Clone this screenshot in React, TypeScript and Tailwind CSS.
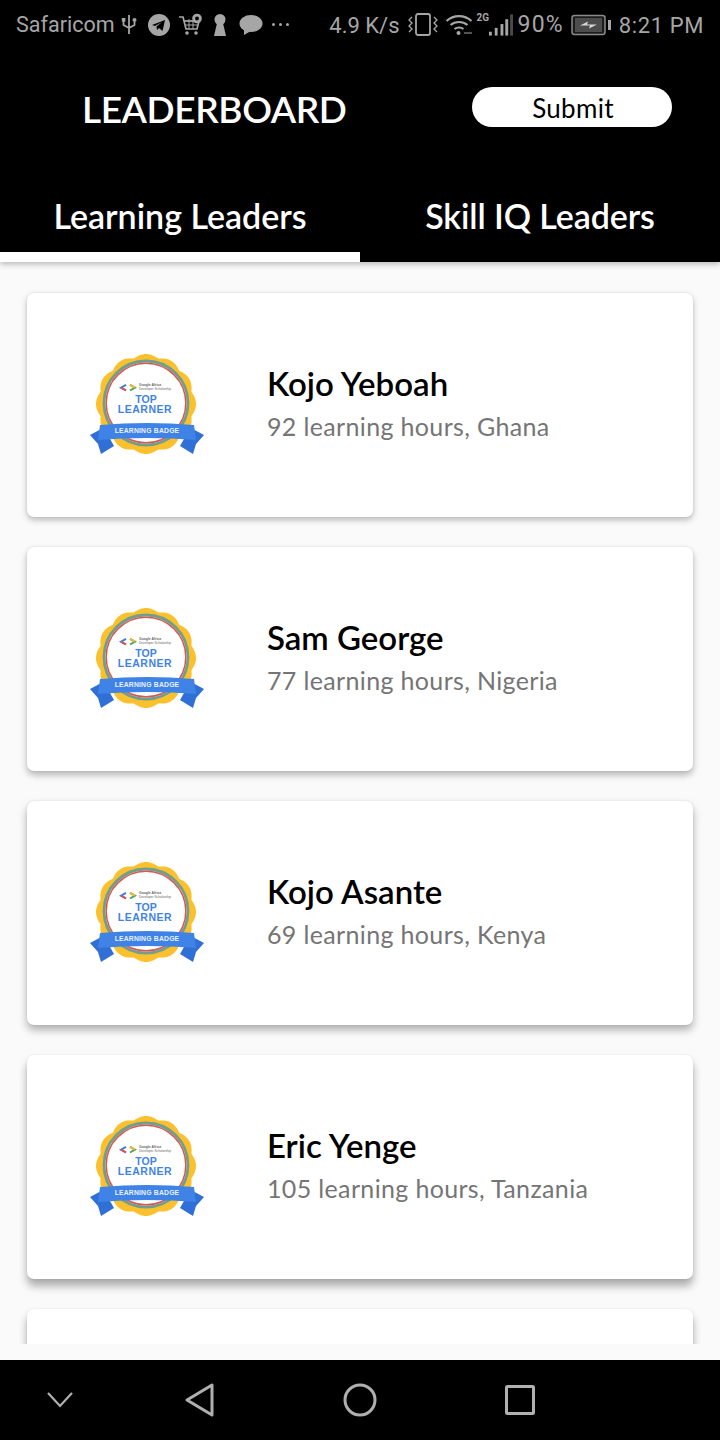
const leaders = [
  { name: "Kojo Yeboah", detail: "92 learning hours, Ghana", shadow: "shadow-[0_3px_6px_rgba(0,0,0,0.26),0_0_2px_rgba(0,0,0,0.1)]" },
  { name: "Sam George", detail: "77 learning hours, Nigeria", shadow: "shadow-[0_4px_7px_rgba(0,0,0,0.28),0_0_2px_rgba(0,0,0,0.1)]" },
  { name: "Kojo Asante", detail: "69 learning hours, Kenya", shadow: "shadow-[0_5px_8px_rgba(0,0,0,0.3),0_0_2px_rgba(0,0,0,0.1)]" },
  { name: "Eric Yenge", detail: "105 learning hours, Tanzania", shadow: "shadow-[0_7px_9px_rgba(0,0,0,0.32),0_0_2px_rgba(0,0,0,0.1)]" },
];

// scalloped edge for the badge, 12 bumps round the centre
function scallopPath(cx: number, cy: number, r: number, amp: number, bumps: number) {
  const pts: string[] = [];
  for (let i = 0; i <= 360; i++) {
    const a = (i / 360) * Math.PI * 2;
    const rad = r + amp * Math.abs(Math.cos((a * bumps) / 2));
    pts.push(`${(cx + rad * Math.sin(a)).toFixed(2)} ${(cy - rad * Math.cos(a)).toFixed(2)}`);
  }
  return `M${pts.join("L")}Z`;
}

function Badge() {
  return (
    <svg width="116" height="104" viewBox="0 0 116 104" className="shrink-0">
      <path d={scallopPath(57, 51, 47, 3, 12)} fill="#fbc02d" />
      <circle cx="57" cy="50" r="42" fill="#fff" stroke="#6f9f8e" strokeWidth="2.800" />
      <circle cx="57" cy="50" r="39.800" fill="#fff" stroke="#d9574f" strokeWidth="1.500" />
      <path d="M37 37.500l-5-2.800 5-2.800" fill="none" stroke="#3b7de8" strokeWidth="2" />
      <path d="M37 37.500l-5-2.800" fill="none" stroke="#e0524a" strokeWidth="2" />
      <path d="M41 31.900l5 2.800-5 2.800" fill="none" stroke="#4aa564" strokeWidth="2" />
      <path d="M41 31.900l5 2.800" fill="none" stroke="#f2b632" strokeWidth="2" />
      <text x="50" y="32.500" fontSize="3.400" fontWeight="700" fill="#666" fontFamily="Liberation Sans, sans-serif">Google Africa</text>
      <text x="50" y="36.800" fontSize="3.200" fill="#666" fontFamily="Liberation Sans, sans-serif">Developer Scholarship</text>
      <text x="57" y="50" textAnchor="middle" fontSize="10.500" fontWeight="700" fill="#3f83e6" fontFamily="Liberation Sans, sans-serif">TOP</text>
      <text x="56" y="60" textAnchor="middle" fontSize="10.500" fontWeight="700" fill="#3f83e6" letterSpacing="0.500" fontFamily="Liberation Sans, sans-serif">LEARNER</text>
      <path d="M1 82l15-8 5 12 4 7-13 8-3-10z" fill="#2f6fd6" />
      <path d="M115 82l-15-8-5 12-4 7 13 8 3-10z" fill="#2f6fd6" />
      <path d="M11 72Q58 68 105 72L107 87Q58 83 9 87z" fill="#3f83e6" />
      <text x="58" y="79.500" textAnchor="middle" fontSize="6.800" fontWeight="700" fill="#eaf2ff" letterSpacing="0.200" fontFamily="Liberation Sans, sans-serif">LEARNING BADGE</text>
    </svg>
  );
}

function LeaderCard({ name, detail, shadow }: { name: string; detail: string; shadow: string }) {
  return (
    <div className={`flex h-[224px] shrink-0 items-center rounded-[7px] bg-white pl-[62px] ${shadow}`}>
      <Badge />
      <div className="ml-[62px] flex flex-col">
        <div className="text-[33px] leading-[41px] font-semibold text-black">{name}</div>
        <div className="text-[25px] leading-[44px] tracking-[0.35px] text-[#757575]">{detail}</div>
      </div>
    </div>
  );
}

function StatusBar() {
  return (
    <div className="flex h-[50px] items-center justify-between px-[16px] font-['Roboto',sans-serif] text-[#a6a6a6]">
      <div className="flex items-center">
        <span className="text-[21.5px]">Safaricom</span>
        <svg width="16" height="24" viewBox="0 0 16 24" className="ml-[6px]" fill="none" stroke="#a6a6a6" strokeWidth="1.800">
          <path d="M8 2v19M2.500 8v4l5.500 3 5.500-3V9" />
          <rect x="0.800" y="5" width="3.600" height="3.600" fill="#a6a6a6" stroke="none" />
          <circle cx="13.500" cy="7" r="2" fill="#a6a6a6" stroke="none" />
        </svg>
        <svg width="22" height="22" viewBox="0 0 22 22" className="ml-[11px]">
          <circle cx="11" cy="11" r="11" fill="#a6a6a6" />
          <path d="M4 11l13-5-2.500 11-3.500-3-2 2-.5-3.500 5.500-4.500-7 4z" fill="#000" />
        </svg>
        <svg width="26" height="24" viewBox="0 0 26 24" className="ml-[8px]" fill="none" stroke="#a6a6a6" strokeWidth="1.700">
          <path d="M1 4h4l3 12h11l2-8H6" />
          <path d="M7 8h14M7.500 12h12M11 6v10M15 8v8" strokeWidth="1" />
          <circle cx="9" cy="20" r="1.800" fill="#a6a6a6" stroke="none" />
          <circle cx="18" cy="20" r="1.800" fill="#a6a6a6" stroke="none" />
          <circle cx="19" cy="5.500" r="4.800" fill="#a6a6a6" stroke="none" />
          <circle cx="19" cy="5.500" r="1.900" fill="#000" stroke="none" />
        </svg>
        <svg width="14" height="24" viewBox="0 0 14 24" className="ml-[9px]" fill="#a6a6a6">
          <circle cx="7" cy="6.500" r="5.500" />
          <path d="M4.500 8h5l3.500 15H1z" />
        </svg>
        <svg width="24" height="22" viewBox="0 0 24 22" className="ml-[12px]" fill="#a6a6a6">
          <ellipse cx="12" cy="9.500" rx="11.500" ry="8.500" />
          <path d="M5 14l0 7 7-4z" />
        </svg>
        <span className="ml-[9px] flex gap-[4px] pb-[2px]">
          <span className="size-[3px] rounded-full bg-[#a6a6a6]" />
          <span className="size-[3px] rounded-full bg-[#a6a6a6]" />
          <span className="size-[3px] rounded-full bg-[#a6a6a6]" />
        </span>
      </div>
      <div className="flex items-center text-[22px]">
        <span>4.9 K/s</span>
        <svg width="30" height="26" viewBox="0 0 30 26" className="ml-[8px]" fill="none" stroke="#a6a6a6" strokeWidth="1.800">
          <rect x="8" y="2" width="14" height="21" rx="2" />
          <path d="M4 5l-3 3 3 3-3 3 3 3 -3 3M26 5l3 3-3 3 3 3-3 3 3 3" strokeWidth="1.300" />
        </svg>
        <svg width="28" height="22" viewBox="0 0 28 22" className="ml-[7px]" fill="none" stroke="#a6a6a6" strokeWidth="2.200">
          <path d="M1.500 7c7-6.500 18-6.500 25 0M5.500 11c4.800-4 12.200-4 17 0M9.500 15c2.500-2 6.500-2 9 0" />
          <circle cx="13.500" cy="19" r="2" fill="#a6a6a6" stroke="none" />
          <path d="M19 19h8" strokeWidth="1" />
        </svg>
        <div className="relative ml-[4px] flex h-[24px] w-[36px] justify-end">
          <span className="absolute top-[-3px] left-0 text-[10px] font-bold">2G</span>
          <svg width="25" height="24" viewBox="0 0 26 24" fill="#a6a6a6">
            <rect x="1" y="19" width="3" height="4" />
            <rect x="7" y="15" width="3" height="8" />
            <rect x="13" y="11" width="3" height="12" />
            <rect x="18" y="6" width="3" height="17" />
            <rect x="23" y="1" width="3" height="22" fill="#4a4a4a" />
          </svg>
        </div>
        <span className="ml-[5px] text-[23px] tracking-[1.2px]">90%</span>
        <svg width="40" height="22" viewBox="0 0 40 22" className="ml-[7px]">
          <rect x="1" y="1.500" width="33" height="19" rx="2.500" fill="#1c1c1c" stroke="#8a8a8a" strokeWidth="1.500" />
          <rect x="4" y="4" width="27" height="14" fill="#4d4d4d" />
          <path d="M9 11.500l8-4-1 3h10l-8 4 1-3z" fill="#d8d8d8" />
          <rect x="37" y="6" width="3" height="10" fill="#a6a6a6" />
        </svg>
        <span className="ml-[8px] tracking-[0.6px]">8:21 PM</span>
      </div>
    </div>
  );
}

export default function App() {
  return (
    <div className="flex h-[1440px] w-[720px] flex-col overflow-hidden bg-[#fafafa] font-['Lato',sans-serif]">
      <div className="relative z-10 bg-black text-white shadow-[0_2px_6px_rgba(0,0,0,0.28)]">
        <StatusBar />
        <div className="flex h-[118px] items-center pr-[48px] pb-[4px] pl-[82px]">
          <h1 className="mt-[3px] text-[37px] font-semibold tracking-[-0.4px]">LEADERBOARD</h1>
          <button className="ml-auto h-[40px] w-[200px] rounded-full bg-white pt-[1px] pl-[2px] text-[26px] leading-none tracking-[0.3px] text-black">
            Submit
          </button>
        </div>
        <div className="flex h-[94px]">
          <div className="flex flex-1 items-center justify-center border-b-[10px] border-white pt-[10px] text-[34px] font-semibold">
            Learning Leaders
          </div>
          <div className="flex flex-1 items-center justify-center pt-[10px] pb-[10px] text-[34px] font-semibold tracking-[-0.1px]">
            Skill IQ Leaders
          </div>
        </div>
      </div>

      <div className="mb-[16px] flex flex-1 flex-col gap-[30px] overflow-hidden px-[27px] pt-[31px]">
        {leaders.map((l) => (
          <LeaderCard key={l.name} name={l.name} detail={l.detail} shadow={l.shadow} />
        ))}
        <div className="h-[224px] shrink-0 rounded-[7px] bg-white shadow-[0_7px_9px_rgba(0,0,0,0.32),0_0_2px_rgba(0,0,0,0.1)]" />
      </div>

      <div className="flex h-[80px] shrink-0 items-center bg-black">
        <svg width="26" height="16" viewBox="0 0 26 16" fill="none" stroke="#b0b0b0" strokeWidth="2.200" className="ml-[47px]">
          <path d="M1 1l12 13L25 1" />
        </svg>
        <svg width="30" height="34" viewBox="0 0 30 34" fill="none" stroke="#b0b0b0" strokeWidth="3" strokeLinejoin="round" className="ml-[112px]">
          <path d="M27 2v30L2 17z" />
        </svg>
        <svg width="34" height="34" viewBox="0 0 34 34" fill="none" stroke="#b0b0b0" strokeWidth="3" className="ml-[128px]">
          <circle cx="17" cy="17" r="15" />
        </svg>
        <svg width="30" height="30" viewBox="0 0 30 30" fill="none" stroke="#b0b0b0" strokeWidth="3" strokeLinejoin="round" className="ml-[128px]">
          <rect x="1.500" y="1.500" width="27" height="27" rx="1" />
        </svg>
      </div>
    </div>
  );
}
